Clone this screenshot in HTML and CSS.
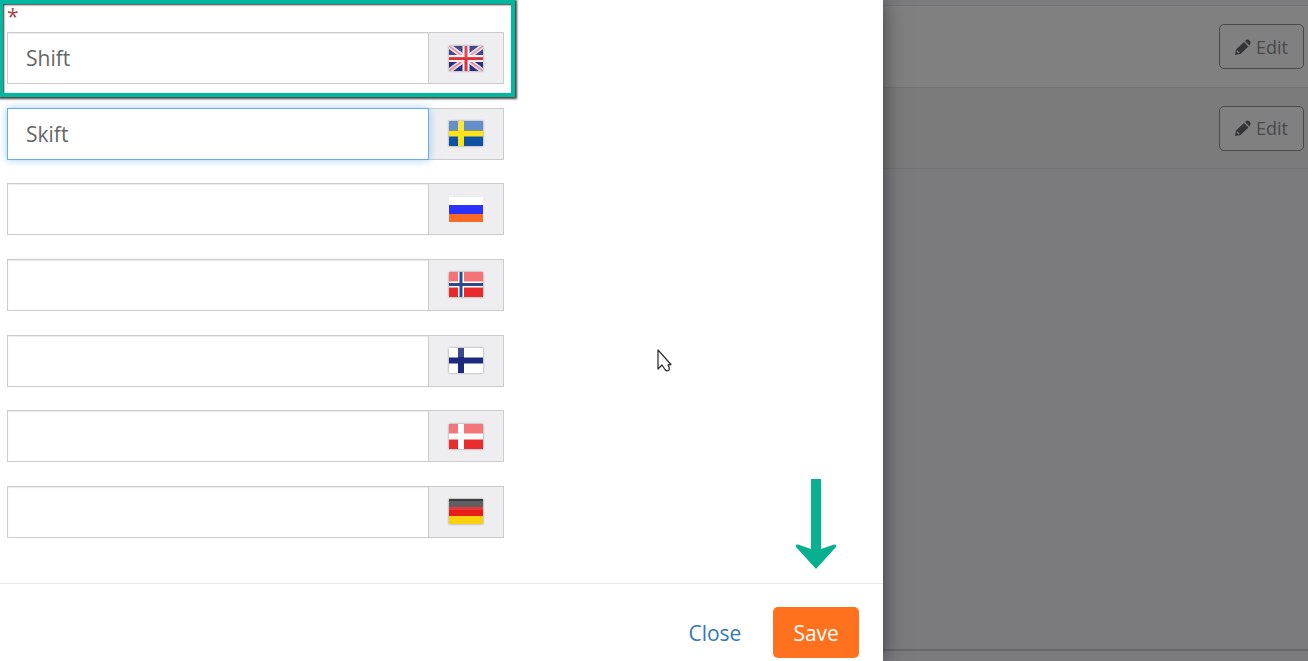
FILE: index.html
```html
<!DOCTYPE html>
<html lang="en">
<head>
    <meta charset="UTF-8">
    <meta name="viewport" content="width=device-width, initial-scale=1.0">
    <title>Edit translations</title>
    <link rel="stylesheet" href="styles.css">
</head>
<body>
    <form class="modal">
        <div class="modal-body">
            <span class="required">*</span>
            <div class="fields">
                <div class="input-group">
                    <input type="text" id="name-en" value="Shift">
                    <label for="name-en" aria-label="English">
                        <svg class="flag" viewBox="0 0 34 25">
                            <rect width="34" height="25" fill="#2b2f7c"/>
                            <path d="M0 0L34 25M34 0L0 25" stroke="#ecdfea" stroke-width="5"/>
                            <path d="M0 0L34 25M34 0L0 25" stroke="#d98a96" stroke-width="1.500"/>
                            <path d="M17 0V25M0 12.5H34" stroke="#f8eef2" stroke-width="7"/>
                            <path d="M17 0V25M0 12.5H34" stroke="#d8343c" stroke-width="3"/>
                            <rect width="34" height="12" fill="#fff" opacity=".12"/>
                        </svg>
                    </label>
                </div>
                <div class="input-group">
                    <input type="text" id="name-sv" class="focused" value="Skift">
                    <label for="name-sv" aria-label="Swedish">
                        <svg class="flag" viewBox="0 0 34 25">
                            <rect width="34" height="25" fill="#0d52a5"/>
                            <rect width="34" height="9" fill="#4a7cc0"/>
                            <path d="M12 0V25M0 12.5H34" stroke="#fbe21c" stroke-width="6"/>
                            <rect width="34" height="9" fill="#fff" opacity=".15"/>
                        </svg>
                    </label>
                </div>
                <div class="input-group">
                    <input type="text" id="name-ru">
                    <label for="name-ru" aria-label="Russian">
                        <svg class="flag flag-plain" viewBox="0 0 34 25">
                            <rect width="34" height="25" fill="#fff"/>
                            <rect y="8" width="34" height="17" fill="#2a32fb"/>
                            <rect y="17" width="34" height="8" fill="#fb6a24"/>
                        </svg>
                    </label>
                </div>
                <div class="input-group">
                    <input type="text" id="name-no">
                    <label for="name-no" aria-label="Norwegian">
                        <svg class="flag" viewBox="0 0 34 25">
                            <rect width="34" height="25" fill="#ea2a2a"/>
                            <rect width="34" height="12" fill="#f47377"/>
                            <path d="M12 0V25M0 12.5H34" stroke="#fff" stroke-width="6"/>
                            <path d="M12 0V25M0 12.5H34" stroke="#2b4a8e" stroke-width="3"/>
                        </svg>
                    </label>
                </div>
                <div class="input-group">
                    <input type="text" id="name-fi">
                    <label for="name-fi" aria-label="Finnish">
                        <svg class="flag" viewBox="0 0 34 25">
                            <rect width="34" height="25" fill="#fff"/>
                            <path d="M12 0V25M0 12.5H34" stroke="#1d2a80" stroke-width="6"/>
                            <rect width="34" height="9" fill="#fff" opacity=".15"/>
                        </svg>
                    </label>
                </div>
                <div class="input-group">
                    <input type="text" id="name-da">
                    <label for="name-da" aria-label="Danish">
                        <svg class="flag" viewBox="0 0 34 25">
                            <rect width="34" height="25" fill="#e92c2e"/>
                            <rect width="34" height="12" fill="#f2767a"/>
                            <path d="M12 0V25M0 12.5H34" stroke="#fff" stroke-width="6"/>
                        </svg>
                    </label>
                </div>
                <div class="input-group">
                    <input type="text" id="name-de">
                    <label for="name-de" aria-label="German">
                        <svg class="flag" viewBox="0 0 34 25">
                            <rect width="34" height="8" fill="#5f5f61"/>
                            <rect width="34" height="2" fill="#3c3c3e"/>
                            <rect y="8" width="34" height="9" fill="#e61e1a"/>
                            <rect y="8" width="34" height="3" fill="#e9383c"/>
                            <rect y="17" width="34" height="8" fill="#fbd00c"/>
                        </svg>
                    </label>
                </div>
            </div>
            <div class="highlight"></div>
            <svg class="cursor" viewBox="0 0 15 24">
                <path d="M1 1V20L5 16L8 20.500Q10 23 12 21Q13 19.500 11 16L14 15.500Z" fill="#fff" stroke="#333" stroke-width="1.300" stroke-linejoin="round"/>
            </svg>
        </div>
        <div class="modal-footer">
            <button type="button" class="btn-close">Close</button>
            <button type="button" class="btn-save">Save</button>
            <svg class="arrow" viewBox="0 0 42 90">
                <path d="M16 0H26V70L39 65.500Q42 65 41 68L21 90L1 68Q0 65 3 65.500L16 70Z" fill="#09b08f"/>
            </svg>
        </div>
    </form>
    <main class="page">
        <div class="list">
            <div class="row">
                <button type="button" class="btn-edit">
                    <svg class="pencil" viewBox="0 0 16 16">
                        <path d="M0 16L1 10.500L9 3L13.500 7.500L5.500 15ZM10 2L11.500 .8Q13 0 14 1L15.300 2.500Q16 3.500 15.300 4.500L14.500 6.500Z" fill="#343338"/>
                        <path d="M2 12L4 14" stroke="#808080" stroke-width="1.500"/>
                    </svg>
                    Edit
                </button>
            </div>
            <div class="row">
                <button type="button" class="btn-edit">
                    <svg class="pencil" viewBox="0 0 16 16">
                        <path d="M0 16L1 10.500L9 3L13.500 7.500L5.500 15ZM10 2L11.500 .8Q13 0 14 1L15.300 2.500Q16 3.500 15.300 4.500L14.500 6.500Z" fill="#343338"/>
                        <path d="M2 12L4 14" stroke="#808080" stroke-width="1.500"/>
                    </svg>
                    Edit
                </button>
            </div>
        </div>
        <div class="page-footer"></div>
    </main>
</body>
</html>
```

FILE: styles.css
```css
* { box-sizing: border-box; }
body { margin: 0; min-height: 100vh; display: grid; grid-template-columns: 27fr 13fr; font-family: "Open Sans", sans-serif; font-size: 21px; color: #555; background: #7b7a7f; }
button, input { font: inherit; }
button { cursor: pointer; }

.modal { position: relative; z-index: 1; display: flex; flex-direction: column; background: #fff; box-shadow: 0 0 20px rgba(0, 0, 0, 0.5); }
.modal-body { position: relative; flex: 1; display: flex; flex-direction: column; padding: 4px 7px 45px; }
.required { height: 28px; line-height: 24px; color: #a94442; }
.fields { flex: 1; display: flex; flex-direction: column; justify-content: space-between; }
.input-group { display: flex; width: 100%; max-width: 497px; height: 52px; }
.input-group input { flex: 1; min-width: 0; padding: 0 18px; color: #666; background: #fff; border: 1px solid #ccc; border-radius: 0; outline: none; box-shadow: inset 0 1px 1px rgba(0, 0, 0, 0.08); }
.input-group input.focused { position: relative; border-color: #66afe9; box-shadow: 0 0 8px rgba(102, 175, 233, 0.6); }
.input-group label { width: 75px; display: flex; align-items: center; justify-content: center; background: #eeeef0; border: 1px solid #ccc; border-left: 0; }
.flag { width: 34px; height: 25px; filter: drop-shadow(0 0 1px rgba(0, 0, 0, 0.4)); }
.flag-plain { filter: none; }

.highlight { position: absolute; top: 0; left: -1px; width: 516px; height: 97px; border: 4px solid #00b89f; box-shadow: 1px 1px 2px 1px #444, inset 1px 1px 2px #333; pointer-events: none; }
.cursor { position: absolute; left: 657px; top: 349px; width: 15px; height: 24px; }

.modal-footer { position: relative; display: flex; justify-content: flex-end; gap: 12px; padding: 23px 24px 3px; border-top: 1px solid #e9e9e9; }
.modal-footer button { height: 51px; padding: 0 20px; border: 0; border-radius: 5px; }
.btn-close { color: #337ab7; background: none; }
.btn-save { color: #fff; background: #ff711c; }
.arrow { position: absolute; right: 46px; bottom: 92px; width: 42px; height: 90px; }

.page { display: flex; flex-direction: column; }
.list { flex: 1; padding-top: 5px; }
.row { display: flex; align-items: center; justify-content: flex-end; height: 82px; padding-right: 4px; background: #808080; border-top: 1px solid #747476; }
.row:last-child { background: #7b7b7b; border-bottom: 1px solid #737373; }
.btn-edit { display: flex; align-items: center; gap: 5px; height: 45px; padding: 0 15px; font-size: 18px; color: #48484d; background: #808080; border: 1px solid #4a4a4e; border-radius: 5px; }
.pencil { width: 16px; height: 16px; }
.page-footer { height: 12px; border-top: 2px solid #66676b; }
```
